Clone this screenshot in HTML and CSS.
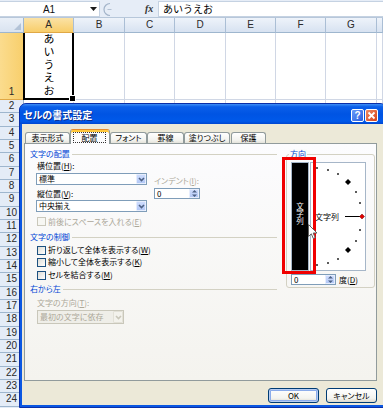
FILE: index.html
```html
<!DOCTYPE html>
<html lang="ja">
<head>
<meta charset="utf-8">
<title>セルの書式設定</title>
<link rel="stylesheet" href="styles.css">
</head>
<body>
<div class="excel">
  <div class="fbar">
    <div class="namebox"><span class="nb-text">A1</span><svg class="nb-arrow" width="7" height="4" viewBox="0 0 7 4"><path d="M0 0H7L3.5 4Z" fill="#1a1a1a"/></svg></div>
    <div class="fb-mid"><svg width="14" height="15" viewBox="0 0 14 15"><path d="M8 1.5A6 6 0 0 0 8 13.5" fill="none" stroke="#a3b4c9" stroke-width="1.2"/><path d="M5.5 7.5H9.5" stroke="#b3c1d3" stroke-width="1"/></svg></div>
    <div class="fx">fx</div>
    <div class="finput">あいうえお</div>
  </div>
  <div class="sheet">
    <div class="corner"><svg width="7" height="7" viewBox="0 0 7 7"><path d="M7 0V7H0Z" fill="#b3c3d7"/></svg></div>
    <div class="ch sel">A</div><div class="ch">B</div><div class="ch">C</div><div class="ch">D</div><div class="ch">E</div><div class="ch">F</div><div class="ch">G</div><div class="ch"></div>
    <div class="rh sel r1">1</div><div class="c a1"><span class="vtext">あいうえお</span></div><div class="c"></div><div class="c"></div><div class="c"></div><div class="c"></div><div class="c"></div><div class="c"></div><div class="c"></div>
    <div class="rh">2</div><div class="c"></div><div class="c"></div><div class="c"></div><div class="c"></div><div class="c"></div><div class="c"></div><div class="c"></div><div class="c"></div>
    <div class="rh">3</div><div class="c"></div><div class="c"></div><div class="c"></div><div class="c"></div><div class="c"></div><div class="c"></div><div class="c"></div><div class="c"></div>
    <div class="rh">4</div><div class="c"></div><div class="c"></div><div class="c"></div><div class="c"></div><div class="c"></div><div class="c"></div><div class="c"></div><div class="c"></div>
    <div class="rh">5</div><div class="c"></div><div class="c"></div><div class="c"></div><div class="c"></div><div class="c"></div><div class="c"></div><div class="c"></div><div class="c"></div>
    <div class="rh">6</div><div class="c"></div><div class="c"></div><div class="c"></div><div class="c"></div><div class="c"></div><div class="c"></div><div class="c"></div><div class="c"></div>
    <div class="rh">7</div><div class="c"></div><div class="c"></div><div class="c"></div><div class="c"></div><div class="c"></div><div class="c"></div><div class="c"></div><div class="c"></div>
    <div class="rh">8</div><div class="c"></div><div class="c"></div><div class="c"></div><div class="c"></div><div class="c"></div><div class="c"></div><div class="c"></div><div class="c"></div>
    <div class="rh">9</div><div class="c"></div><div class="c"></div><div class="c"></div><div class="c"></div><div class="c"></div><div class="c"></div><div class="c"></div><div class="c"></div>
    <div class="rh">10</div><div class="c"></div><div class="c"></div><div class="c"></div><div class="c"></div><div class="c"></div><div class="c"></div><div class="c"></div><div class="c"></div>
    <div class="rh">11</div><div class="c"></div><div class="c"></div><div class="c"></div><div class="c"></div><div class="c"></div><div class="c"></div><div class="c"></div><div class="c"></div>
    <div class="rh">12</div><div class="c"></div><div class="c"></div><div class="c"></div><div class="c"></div><div class="c"></div><div class="c"></div><div class="c"></div><div class="c"></div>
    <div class="rh">13</div><div class="c"></div><div class="c"></div><div class="c"></div><div class="c"></div><div class="c"></div><div class="c"></div><div class="c"></div><div class="c"></div>
    <div class="rh">14</div><div class="c"></div><div class="c"></div><div class="c"></div><div class="c"></div><div class="c"></div><div class="c"></div><div class="c"></div><div class="c"></div>
    <div class="rh">15</div><div class="c"></div><div class="c"></div><div class="c"></div><div class="c"></div><div class="c"></div><div class="c"></div><div class="c"></div><div class="c"></div>
    <div class="rh">16</div><div class="c"></div><div class="c"></div><div class="c"></div><div class="c"></div><div class="c"></div><div class="c"></div><div class="c"></div><div class="c"></div>
    <div class="rh">17</div><div class="c"></div><div class="c"></div><div class="c"></div><div class="c"></div><div class="c"></div><div class="c"></div><div class="c"></div><div class="c"></div>
    <div class="rh">18</div><div class="c"></div><div class="c"></div><div class="c"></div><div class="c"></div><div class="c"></div><div class="c"></div><div class="c"></div><div class="c"></div>
    <div class="rh">19</div><div class="c"></div><div class="c"></div><div class="c"></div><div class="c"></div><div class="c"></div><div class="c"></div><div class="c"></div><div class="c"></div>
    <div class="rh">20</div><div class="c"></div><div class="c"></div><div class="c"></div><div class="c"></div><div class="c"></div><div class="c"></div><div class="c"></div><div class="c"></div>
    <div class="rh">21</div><div class="c"></div><div class="c"></div><div class="c"></div><div class="c"></div><div class="c"></div><div class="c"></div><div class="c"></div><div class="c"></div>
    <div class="rh">22</div><div class="c"></div><div class="c"></div><div class="c"></div><div class="c"></div><div class="c"></div><div class="c"></div><div class="c"></div><div class="c"></div>
    <div class="rh">23</div><div class="c"></div><div class="c"></div><div class="c"></div><div class="c"></div><div class="c"></div><div class="c"></div><div class="c"></div><div class="c"></div>
    <div class="rh">24</div><div class="c"></div><div class="c"></div><div class="c"></div><div class="c"></div><div class="c"></div><div class="c"></div><div class="c"></div><div class="c"></div>
    <div class="rh"></div><div class="c"></div><div class="c"></div><div class="c"></div><div class="c"></div><div class="c"></div><div class="c"></div><div class="c"></div><div class="c"></div>
  </div>
</div>

<div class="dialog">
  <div class="titlebar">
    <span class="title">セルの書式設定</span>
    <span class="tbtn help">?</span>
    <span class="tbtn close"><svg width="9" height="9" viewBox="0 0 9 9"><path d="M1.5 1.5L7.5 7.5M7.5 1.5L1.5 7.5" stroke="#fff" stroke-width="1.8"/></svg></span>
  </div>
  <div class="dbody">
    <div class="tabs">
      <div class="tab t1">表示形式</div>
      <div class="tab sel"><span class="focus">配置</span></div>
      <div class="tab t3">フォント</div>
      <div class="tab t4">罫線</div>
      <div class="tab t5">塗りつぶし</div>
      <div class="tab t6">保護</div>
    </div>
    <div class="panel">
      <div class="left">
        <div class="sec"><span class="sec-label">文字の配置</span><span class="rule"></span></div>
        <div class="align-row">
          <div class="align-col">
            <div class="lbl">横位置(<u>H</u>):</div>
            <div class="combo w-h"><span class="combo-text">標準</span><span class="combo-btn"><svg width="7" height="5" viewBox="0 0 7 5"><path d="M1 1L3.5 3.5L6 1" fill="none" stroke="#4d6185" stroke-width="1.6"/></svg></span></div>
            <div class="lbl lbl-v">縦位置(<u>V</u>):</div>
            <div class="combo w-h"><span class="combo-text">中央揃え</span><span class="combo-btn"><svg width="7" height="5" viewBox="0 0 7 5"><path d="M1 1L3.5 3.5L6 1" fill="none" stroke="#4d6185" stroke-width="1.6"/></svg></span></div>
          </div>
          <div class="indent-col">
            <div class="lbl dis">インデント(<u>I</u>):</div>
            <div class="spin w-indent"><span class="spin-text">0</span><span class="spin-btn"><svg width="7" height="9" viewBox="0 0 7 9"><path d="M1 3.5L3.5 1L6 3.5ZM1 5.5L3.5 8L6 5.5Z" fill="#4d6185"/></svg></span></div>
          </div>
        </div>
        <div class="check dis cb-e"><span class="box"></span><span>前後にスペースを入れる(<u>E</u>)</span></div>
        <div class="sec sec2"><span class="sec-label">文字の制御</span><span class="rule"></span></div>
        <div class="check cb-w"><span class="box"></span><span>折り返して全体を表示する(<u>W</u>)</span></div>
        <div class="check"><span class="box"></span><span>縮小して全体を表示する(<u>K</u>)</span></div>
        <div class="check cb-m"><span class="box"></span><span>セルを結合する(<u>M</u>)</span></div>
        <div class="sec sec3"><span class="sec-label">右から左</span><span class="rule"></span></div>
        <div class="lbl dis lbl-dir">文字の方向(<u>T</u>):</div>
        <div class="combo dis w-dir"><span class="combo-text">最初の文字に依存</span><span class="combo-btn"><svg width="7" height="5" viewBox="0 0 7 5"><path d="M1 1L3.5 3.5L6 1" fill="none" stroke="#c9c7ba" stroke-width="1.6"/></svg></span></div>
      </div>
      <div class="orient">
        <div class="legend">方向</div>
        <div class="orient-row">
          <div class="vbox"><span class="vtext2">文字列</span></div>
          <div class="dial">
            <svg width="54" height="107" viewBox="0 0 54 107">
              <g fill="#000">
                <rect x="5.2" y="4.2" width="1.6" height="1.6"/>
                <rect x="16.2" y="6.2" width="1.6" height="1.6"/>
                <rect x="26.2" y="10.2" width="1.6" height="1.6"/>
                <rect x="44.2" y="28.2" width="1.6" height="1.6"/>
                <rect x="48.2" y="39.2" width="1.6" height="1.6"/>
                <rect x="48.2" y="66.2" width="1.6" height="1.6"/>
                <rect x="44.2" y="77.2" width="1.6" height="1.6"/>
                <rect x="26.2" y="95.2" width="1.6" height="1.6"/>
                <rect x="16.2" y="99.2" width="1.6" height="1.6"/>
                <rect x="5.2" y="101.2" width="1.6" height="1.6"/>
                <path d="M37 16L40 19L37 22L34 19Z"/>
                <path d="M37 84L40 87L37 90L34 87Z"/>
              </g>
              <text x="4" y="53.5" class="dial-text" dominant-baseline="central">文字列</text>
              <path d="M34 53.5H49" stroke="#000" stroke-width="1"/>
              <path d="M51 51L53.5 53.5L51 56L48.5 53.5Z" fill="#e00000" stroke="#700" stroke-width="0.5"/>
            </svg>
          </div>
        </div>
        <div class="deg-row">
          <div class="spin w-deg"><span class="spin-text">0</span><span class="spin-btn"><svg width="7" height="9" viewBox="0 0 7 9"><path d="M1 3.5L3.5 1L6 3.5ZM1 5.5L3.5 8L6 5.5Z" fill="#4d6185"/></svg></span></div>
          <span class="deg-lbl">度(<u>D</u>)</span>
        </div>
      </div>
      <div class="highlight"></div>
      <svg class="cursor" width="10" height="16" viewBox="0 0 10 16"><path d="M0.5 0.5L0.5 12.5L3.3 9.8L5.3 14.5L7.2 13.6L5.2 9L9 9Z" fill="#fff" stroke="#606060" stroke-width="1"/></svg>
    </div>
    <div class="buttons">
      <div class="btn ok">OK</div>
      <div class="btn">キャンセル</div>
    </div>
  </div>
</div>
</body>
</html>
```

FILE: styles.css
```css
* { box-sizing: border-box; margin: 0; padding: 0; }
html, body { width: 383px; height: 408px; overflow: hidden; }
body { background: #fff; font-family: "Liberation Sans", Arial, sans-serif; position: relative; }

/* ---------- formula bar ---------- */
.fbar {
  display: flex;
  height: 18px;
  padding-top: 1px;
  background: #e6edf7;
  border-bottom: 1px solid #b7c7da;
}
.namebox {
  width: 100px;
  background: #fff;
  border: 1px solid #c5d2e2;
  border-left: none;
  display: flex;
  align-items: center;
  padding-right: 2px;
}
.nb-text { flex: 1; text-align: center; font-size: 10px; color: #111; padding-left: 8px; }
.nb-arrow { display: block; }
.fb-mid { width: 45px; display: flex; align-items: center; padding-left: 2px; }
.fb-mid svg { display: block; }
.fx {
  width: 13px;
  font: italic bold 10px/15px "Liberation Serif", serif;
  color: #333;
}
.finput {
  flex: 1;
  background: #fff;
  border: 1px solid #c5d2e2;
  border-right: none;
  font: 10px/14px "Noto Sans CJK JP", sans-serif;
  padding-left: 4px;
  color: #000;
}

/* ---------- sheet ---------- */
.sheet {
  display: grid;
  grid-template-columns: 24px 50px 51px 50px 51px 50px 50px 51px 1fr;
  grid-template-rows: 15px 67px;
  grid-auto-rows: 13.33px;
  font-size: 10px;
  color: #2a2a2a;
}
.corner {
  background: linear-gradient(#eaf0f8, #d9e3f0);
  border-right: 1px solid #9eb6ce;
  border-bottom: 1px solid #9eb6ce;
  display: flex;
  align-items: flex-end;
  justify-content: flex-end;
  padding: 0 2px 2px 0;
}
.corner svg { display: block; }
.ch {
  background: linear-gradient(#eef3fa, #d7e2f1);
  border-right: 1px solid #aabed5;
  border-bottom: 1px solid #9eb6ce;
  text-align: center;
  line-height: 14px;
}
.ch.sel {
  background: linear-gradient(#fbe2a6, #f8cd6a);
  border-bottom-color: #e0a845;
}
.rh {
  background: #e4ecf7;
  border-right: 1px solid #9eb6ce;
  border-bottom: 1px solid #9eb6ce;
  display: flex;
  align-items: center;
  justify-content: center;
  line-height: 10px;
}
.rh.sel {
  background: linear-gradient(90deg, #fbdc8e, #f8cf6c);
  align-items: flex-end;
  padding-bottom: 2px;
  border-bottom-color: #e0a845;
}
.c {
  border-right: 1px solid #d0d7e5;
  border-bottom: 1px solid #d0d7e5;
}
.a1 {
  position: relative;
  display: flex;
  justify-content: center;
  align-items: flex-end;
}
.a1::after {
  content: "";
  position: absolute;
  left: -1px;
  right: -1px;
  top: 0;
  bottom: -1px;
  border: 2px solid #000;
  border-top: none;
}
.a1::before {
  content: "";
  position: absolute;
  right: -3px;
  bottom: -3px;
  width: 5px;
  height: 5px;
  background: #000;
  border: 1px solid #fff;
  z-index: 1;
}
.vtext {
  writing-mode: vertical-rl;
  text-orientation: upright;
  font: 11px/13px "Noto Sans CJK JP", sans-serif;
  letter-spacing: 2px;
  color: #000;
  margin-bottom: 1px;
}

/* ---------- dialog ---------- */
.dialog {
  position: absolute;
  left: 19px;
  top: 103px;
  width: 368px;
  height: 305px;
  background: #0b57e2;
  border: 1px solid #0a2fa8;
  border-radius: 7px 7px 0 0;
  display: flex;
  flex-direction: column;
  font-family: "Noto Sans CJK JP", sans-serif;
  font-size: 8px;
  line-height: 10px;
  font-feature-settings: "palt" 1;
  color: #000;
}
.titlebar {
  height: 20px;
  display: flex;
  align-items: center;
  padding: 1px 8px 0 3px;
  background: linear-gradient(#3f8ff6 0%, #0b5fe9 14%, #0054e3 50%, #0059ea 86%, #0046cf 100%);
  border-radius: 6px 6px 0 0;
}
.title {
  flex: 1;
  color: #fff;
  font-size: 10px;
  font-weight: bold;
  line-height: 12px;
  text-shadow: 1px 1px 0 #0a2c8c;
}
.tbtn {
  width: 13px;
  height: 13px;
  border: 1px solid #fff;
  border-radius: 2px;
  display: flex;
  align-items: center;
  justify-content: center;
  margin-top: 2px;
}
.help {
  background: linear-gradient(135deg, #6b9bfa, #2a5fde);
  color: #fff;
  font: bold 10px/11px "Liberation Sans", sans-serif;
  margin-right: 1px;
}
.close { background: linear-gradient(135deg, #f08a63, #d6431b); }
.close svg { display: block; }

.dbody {
  flex: 1;
  margin: 0 2px 2px 2px;
  background: #ece9d8;
  padding: 5px 0 0 2px;
}

/* tabs */
.tabs {
  display: flex;
  align-items: flex-end;
  height: 14px;
  padding-left: 1px;
}
.tab {
  height: 11px;
  border: 1px solid #919b9c;
  border-bottom: none;
  border-radius: 3px 3px 0 0;
  background: linear-gradient(#ffffff, #f3f3ef 70%, #e4e3db);
  text-align: center;
  line-height: 10px;
  white-space: nowrap;
}
.t1 { width: 45px; }
.t3 { width: 37px; }
.t4 { width: 37px; }
.t5 { width: 46px; }
.t6 { width: 35px; margin-left: 1px; }
.tab.sel {
  width: 40px;
  height: 15px;
  margin-bottom: -1px;
  position: relative;
  z-index: 1;
  background: #fcfcfe;
  border-top: 1px solid #e68b2c;
  box-shadow: inset 0 2px 0 #ffc83c;
  display: flex;
  padding: 2px 3px 1px 2px;
}
.focus {
  flex: 1;
  border: 1px dotted #333;
  line-height: 9px;
  text-align: center;
}

/* panel */
.panel {
  position: relative;
  width: 353px;
  height: 238px;
  border: 1px solid #919b9c;
  background: linear-gradient(#fcfcfe, #f4f3ee);
  display: flex;
  align-items: flex-start;
  padding: 4px 0 0 5px;
}
.left {
  width: 247px;
  display: flex;
  flex-direction: column;
}
.sec {
  height: 12px;
  display: flex;
  align-items: center;
}
.sec-label { color: #0046d5; white-space: nowrap; }
.rule { flex: 1; height: 1px; background: #d3d1c3; margin-left: 2px; }
.sec2 { margin-top: 3px; }
.sec3 { margin-top: 2px; }

.align-row { display: flex; }
.align-col { display: flex; flex-direction: column; }
.lbl {
  height: 12px;
  line-height: 12px;
  padding-left: 7px;
  white-space: nowrap;
}
.lbl-v { height: 13px; line-height: 13px; margin-top: 2px; }
.lbl-dir { margin-top: 2px; }
.dis { color: #aca899; }

.combo {
  height: 12px;
  border: 1px solid #7f9db9;
  background: #fff;
  display: flex;
  margin-left: 6px;
}
.w-h { width: 111px; }
.align-col .combo:nth-child(2) { margin-top: 1px; }
.combo-text { flex: 1; padding-left: 2px; line-height: 10px; white-space: nowrap; }
.combo-btn {
  width: 10px;
  background: linear-gradient(#cedcfd, #b3c8f6);
  border: 1px solid #e6edfd;
  border-radius: 1px;
  display: flex;
  align-items: center;
  justify-content: center;
}
.combo-btn svg, .spin-btn svg { display: block; }
.combo.dis {
  border-color: #c9c7ba;
  background: #efeee8;
  width: 87px;
  height: 14px;
  margin-left: 7px;
  margin-top: 1px;
}
.combo.dis .combo-text { line-height: 12px; }
.combo.dis .combo-btn { background: #f3f2ec; border-color: #e3e1d7; }

.indent-col {
  margin-left: 7px;
  padding-top: 15px;
  display: flex;
  flex-direction: column;
}
.indent-col .lbl { padding-left: 0; }
.spin {
  height: 11px;
  border: 1px solid #7f9db9;
  background: #fff;
  display: flex;
}
.w-indent { width: 46px; margin-top: 1px; }
.spin-text { flex: 1; padding-left: 2px; line-height: 9px; }
.spin-btn {
  width: 10px;
  background: linear-gradient(#cedcfd, #b3c8f6);
  border: 1px solid #e6edfd;
  display: flex;
  align-items: center;
  justify-content: center;
}

.check {
  height: 12px;
  display: flex;
  align-items: center;
  padding-left: 7px;
  white-space: nowrap;
}
.box {
  width: 9px;
  height: 9px;
  border: 1px solid #1c5180;
  background: linear-gradient(135deg, #dcdcd6, #ffffff);
  margin-right: 2px;
  flex: none;
}
.check.dis .box { border-color: #cac8bb; background: #f7f7f3; }
.cb-e { height: 13px; margin-top: 3px; }
.cb-w { margin-top: 1px; }
.cb-m { margin-top: 1px; }

/* orientation group */
.orient {
  width: 89px;
  height: 134px;
  margin-left: 9px;
  margin-top: 6px;
  border: 1px solid #d3d1c3;
  border-radius: 3px;
  padding-left: 4px;
  display: flex;
  flex-direction: column;
}
.legend {
  align-self: flex-start;
  margin: -6px 0 0 -2px;
  padding: 0 1px;
  height: 10px;
  background: #fbfbfa;
  color: #0046d5;
}
.orient-row { display: flex; margin-top: 3px; height: 109px; }
.vbox {
  width: 18px;
  border: 1px solid #a6b6c8;
  background: #000;
  display: flex;
  align-items: center;
  justify-content: center;
  padding-bottom: 7px;
  margin-right: 1px;
}
.vtext2 {
  writing-mode: vertical-rl;
  text-orientation: upright;
  color: #fff;
  font-size: 7.5px;
  line-height: 9px;
  letter-spacing: 0;
}
.dial {
  width: 56px;
  border: 1px solid #a6b6c8;
  background: #fff;
}
.dial svg { display: block; }
.dial-text { font-family: "Noto Sans CJK JP", sans-serif; font-size: 8px; fill: #000; }
.deg-row { display: flex; align-items: center; margin-top: 3px; }
.w-deg { width: 45px; }
.deg-lbl { margin-left: 3px; white-space: nowrap; }

/* overlays */
.highlight {
  position: absolute;
  left: 257px;
  top: 13px;
  width: 34px;
  height: 117px;
  border: 3px solid #f00000;
}
.cursor {
  position: absolute;
  left: 283px;
  top: 80px;
  display: block;
}

/* buttons */
.buttons {
  display: flex;
  margin-top: 7px;
  padding-left: 244px;
  gap: 7px;
}
.btn {
  width: 51px;
  height: 15px;
  border: 1px solid #003c74;
  border-radius: 3px;
  background: linear-gradient(#ffffff, #f4f4f0 70%, #dcd8cc);
  text-align: center;
  line-height: 13px;
  white-space: nowrap;
}
.btn.ok { box-shadow: inset 0 0 0 1px #b7cdf3, inset 0 0 0 2px #8cacea; }
```
